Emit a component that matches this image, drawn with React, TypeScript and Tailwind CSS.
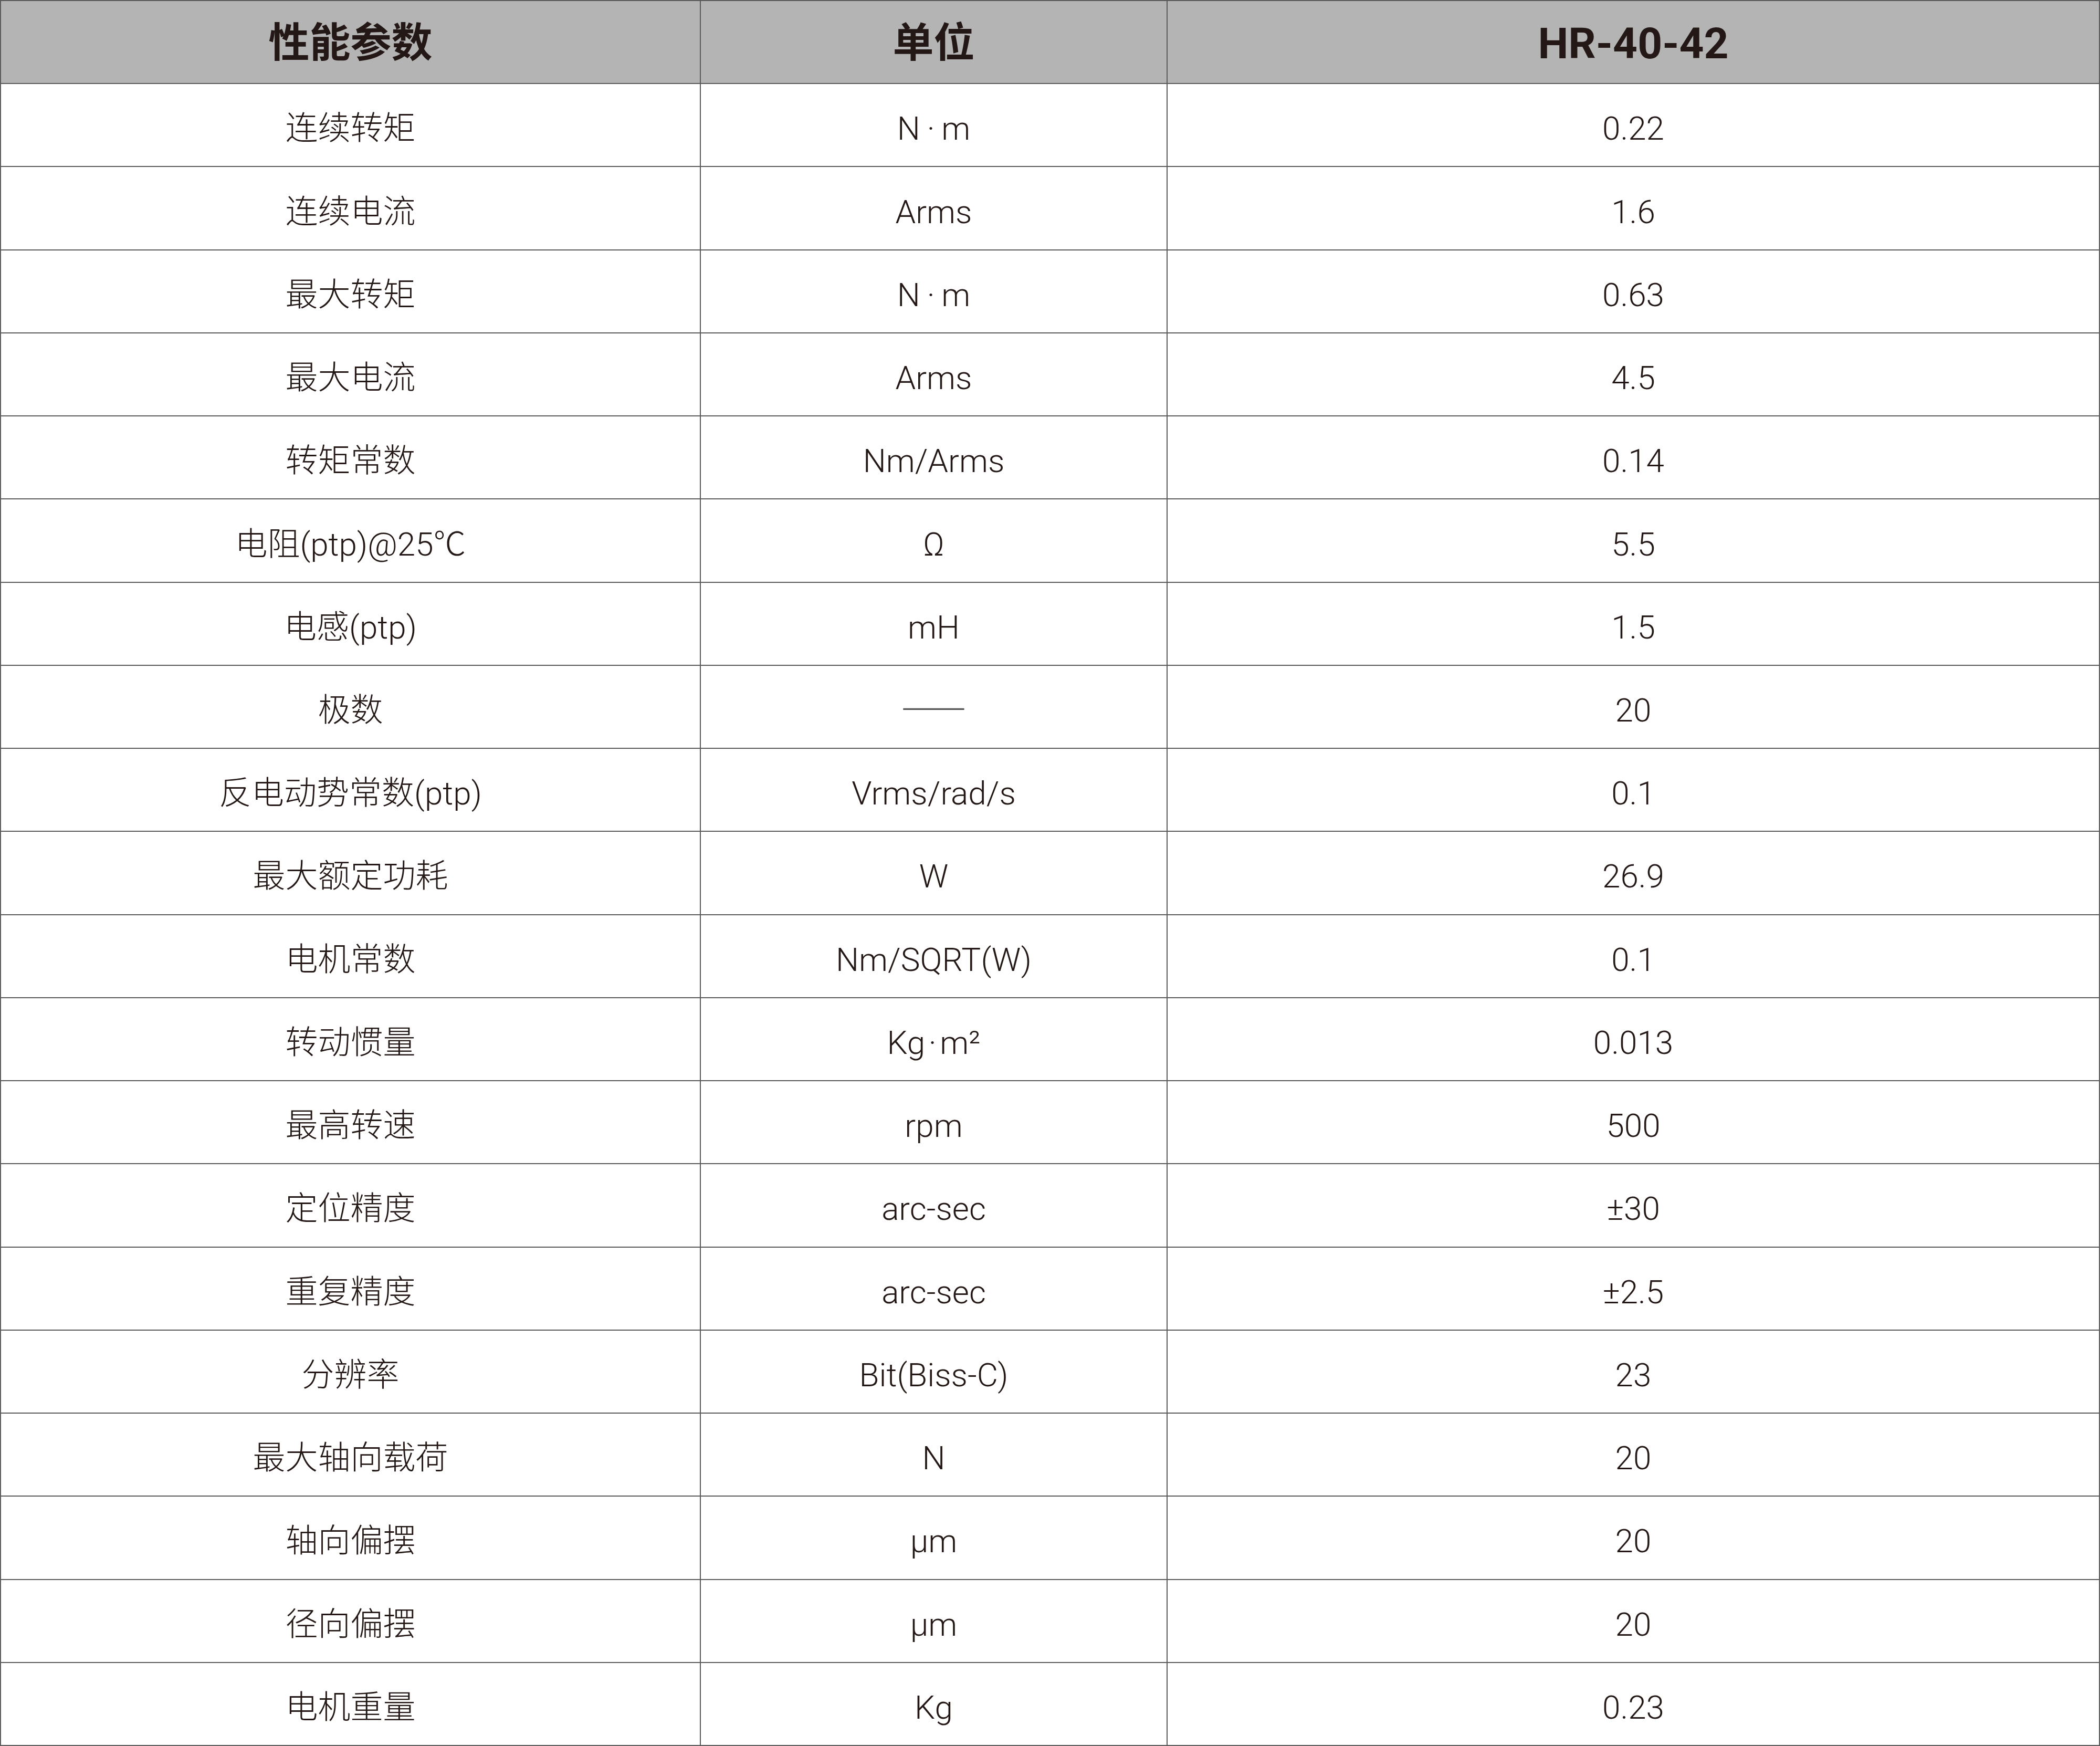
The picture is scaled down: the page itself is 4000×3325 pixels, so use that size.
import React from "react";

const rows: [string, string, string][] = [
  ["连续转矩", "N\u2009·\u2009m", "0.22"],
  ["连续电流", "Arms", "1.6"],
  ["最大转矩", "N\u2009·\u2009m", "0.63"],
  ["最大电流", "Arms", "4.5"],
  ["转矩常数", "Nm/Arms", "0.14"],
  ["电阻(ptp)@25℃", "Ω", "5.5"],
  ["电感(ptp)", "mH", "1.5"],
  ["极数", "——", "20"],
  ["反电动势常数(ptp)", "Vrms/rad/s", "0.1"],
  ["最大额定功耗", "W", "26.9"],
  ["电机常数", "Nm/SQRT(W)", "0.1"],
  ["转动惯量", "Kg\u200a·\u200am²", "0.013"],
  ["最高转速", "rpm", "500"],
  ["定位精度", "arc-sec", "±30"],
  ["重复精度", "arc-sec", "±2.5"],
  ["分辨率", "Bit(Biss-C)", "23"],
  ["最大轴向载荷", "N", "20"],
  ["轴向偏摆", "µm", "20"],
  ["径向偏摆", "µm", "20"],
  ["电机重量", "Kg", "0.23"],
];

export default function App() {
  return (
    <div className="w-[4000px] h-[3325px] bg-[#5a5a5a] p-[2px] grid grid-cols-[1331px_887px_1fr] grid-rows-[repeat(21,1fr)] gap-[2px] text-[#231815] [font-family:Roboto,'Noto_Sans_CJK_SC',sans-serif]">
      <div className="bg-[#b4b4b5] flex items-center justify-center text-[78px] font-bold leading-none pt-[6px]">
        性能参数
      </div>
      <div className="bg-[#b4b4b5] flex items-center justify-center text-[78px] font-bold leading-none pt-[6px]">
        单位
      </div>
      <div className="bg-[#b4b4b5] flex items-center justify-center text-[82px] font-bold leading-none pt-[6px]">
        HR-40-42
      </div>
      {rows.map((r, i) => (
        <React.Fragment key={i}>
          {r.map((c, j) =>
            c === "——" ? (
              <div
                key={j}
                className="bg-white flex items-center justify-center text-[74px] font-light leading-none pb-[14px] text-[#555555] [font-family:'Noto_Sans_CJK_SC',sans-serif]"
              >
                {c}
              </div>
            ) : (
              <div
                key={j}
                className="bg-white flex items-center justify-center text-[62px] font-light leading-none pt-[14px]"
              >
                {c}
              </div>
            )
          )}
        </React.Fragment>
      ))}
    </div>
  );
}
